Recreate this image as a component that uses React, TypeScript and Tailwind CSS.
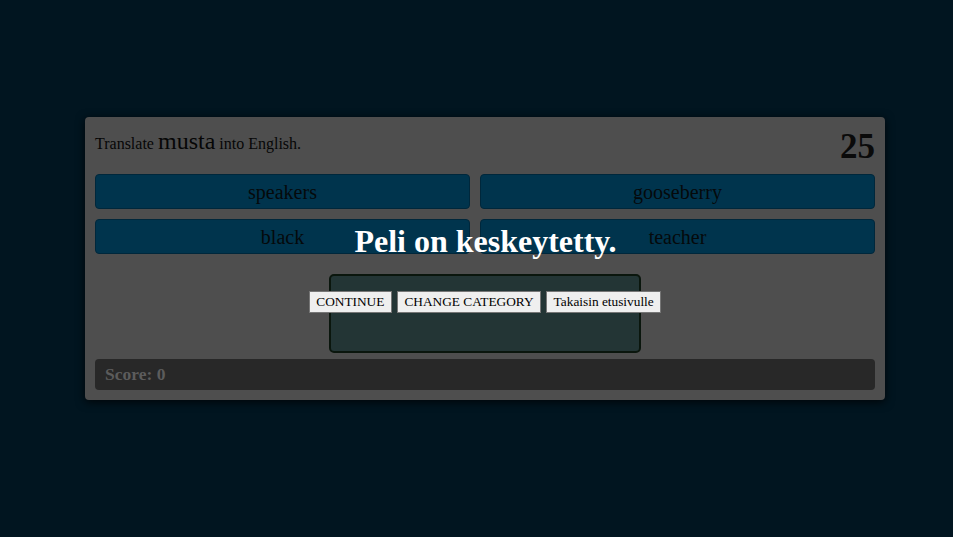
import React from "react";

export default function App() {
  const options = ["speakers", "gooseberry", "black", "teacher"];
  return (
    <div className="w-[953px] h-[537px] bg-[#011520] overflow-hidden" style={{ fontFamily: '"Liberation Serif", "Times New Roman", serif' }}>
      <div className="pt-[117px] pl-[85px]">
        <div className="relative w-[800px] h-[283px] bg-[#4e4e4e] rounded-[4px] shadow-[0_2px_10px_rgba(0,0,0,0.8)] px-[10px] pt-[6px] pb-[10px] flex flex-col">
          <div className="flex justify-between items-start h-[51px]">
            <div className="text-[16px] text-[#060606] leading-normal">
              Translate <span className="text-[24px]">musta</span> into English.
            </div>
            <div className="text-[35px] font-bold text-[#0a0a0a] leading-none pt-[6px]">25</div>
          </div>
          <div className="grid grid-cols-[375px_395px] gap-[10px]">
            {options.map((o) => (
              <div
                key={o}
                className="h-[35px] bg-[#00344d] border border-[#00273b] rounded-[4px] flex items-center justify-center text-[20px] text-[#05090b]"
              >
                {o}
              </div>
            ))}
          </div>
          <div className="flex justify-center mt-[20px]">
            <div className="w-[312px] h-[79px] bg-[#233535] border-2 border-[#0a160d] rounded-[5px]" />
          </div>
          <div className="mt-[6px] h-[31px] bg-[#282828] rounded-[4px] flex items-center pl-[10px] text-[17.5px] font-bold text-[#5c5c5c]">
            Score: 0
          </div>

          <div className="absolute inset-0 flex flex-col items-center pt-[106px]">
            <div className="text-[32px] font-bold text-white leading-[37px] pl-[1px]">Peli on keskeytetty.</div>
            <div className="flex gap-[5px] mt-[31px]">
              <button className="h-[22px] px-[6.5px] bg-[#efefef] border border-[#767676] text-[13.33px] text-black leading-none">CONTINUE</button>
              <button className="h-[22px] px-[6.5px] bg-[#efefef] border border-[#767676] text-[13.33px] text-black leading-none">CHANGE CATEGORY</button>
              <button className="h-[22px] px-[6.5px] bg-[#efefef] border border-[#767676] text-[13.33px] text-black leading-none">Takaisin etusivulle</button>
            </div>
          </div>
        </div>
      </div>
    </div>
  );
}
